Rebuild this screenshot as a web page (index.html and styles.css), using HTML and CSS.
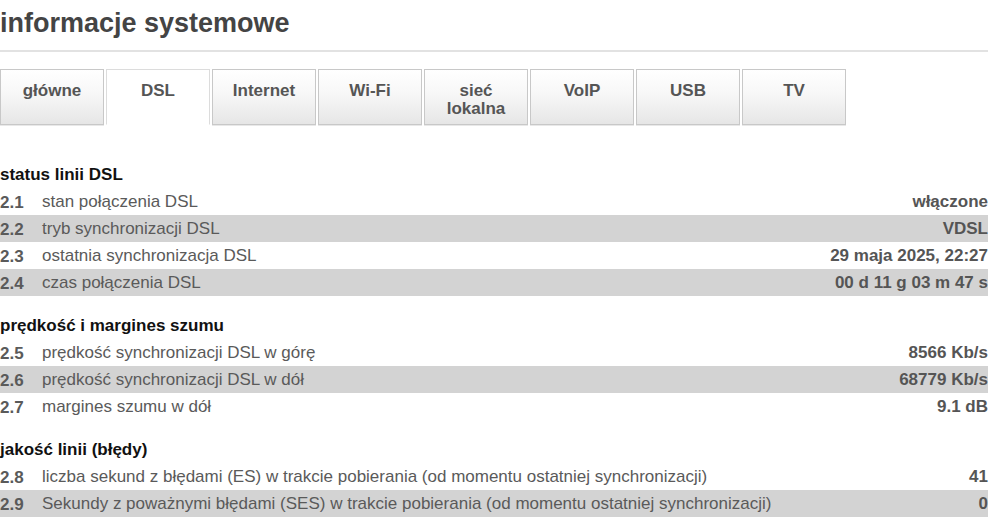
FILE: index.html
```html
<!DOCTYPE html>
<html lang="pl">
<head>
<meta charset="utf-8">
<title>informacje systemowe</title>
<link rel="stylesheet" href="styles.css">
</head>
<body>
<div class="page">
  <h1 class="title">informacje systemowe</h1>
  <nav class="tabs">
    <a class="tab">główne</a>
    <a class="tab active">DSL</a>
    <a class="tab">Internet</a>
    <a class="tab">Wi-Fi</a>
    <a class="tab">sieć<br>lokalna</a>
    <a class="tab">VoIP</a>
    <a class="tab">USB</a>
    <a class="tab">TV</a>
  </nav>

  <section class="group first">
    <h2 class="group-title">status linii DSL</h2>
    <div class="row"><span class="num">2.1</span><span class="label">stan połączenia DSL</span><span class="value">włączone</span></div>
    <div class="row alt"><span class="num">2.2</span><span class="label">tryb synchronizacji DSL</span><span class="value">VDSL</span></div>
    <div class="row"><span class="num">2.3</span><span class="label">ostatnia synchronizacja DSL</span><span class="value">29 maja 2025, 22:27</span></div>
    <div class="row alt"><span class="num">2.4</span><span class="label">czas połączenia DSL</span><span class="value">00 d 11 g 03 m 47 s</span></div>
  </section>

  <section class="group">
    <h2 class="group-title">prędkość i margines szumu</h2>
    <div class="row"><span class="num">2.5</span><span class="label">prędkość synchronizacji DSL w górę</span><span class="value">8566 Kb/s</span></div>
    <div class="row alt"><span class="num">2.6</span><span class="label">prędkość synchronizacji DSL w dół</span><span class="value">68779 Kb/s</span></div>
    <div class="row"><span class="num">2.7</span><span class="label">margines szumu w dół</span><span class="value">9.1 dB</span></div>
  </section>

  <section class="group">
    <h2 class="group-title">jakość linii (błędy)</h2>
    <div class="row"><span class="num">2.8</span><span class="label">liczba sekund z błędami (ES) w trakcie pobierania (od momentu ostatniej synchronizacji)</span><span class="value">41</span></div>
    <div class="row alt"><span class="num">2.9</span><span class="label">Sekundy z poważnymi błędami (SES) w trakcie pobierania (od momentu ostatniej synchronizacji)</span><span class="value">0</span></div>
  </section>
</div>
</body>
</html>
```

FILE: styles.css
```css
html, body {
  margin: 0;
  padding: 0;
  background: #fff;
}

body {
  font-family: "Liberation Sans", Arial, sans-serif;
  color: #555;
}

.page {
  width: 988px;
}

.title {
  margin: 0;
  padding: 8px 0 12px;
  font-size: 27px;
  line-height: 30px;
  font-weight: bold;
  color: #444;
  border-bottom: 2px solid #e2e2e2;
}

.tabs {
  display: flex;
  gap: 2px;
  margin-top: 17px;
}

.tab {
  box-sizing: border-box;
  width: 104px;
  height: 56px;
  padding-top: 12px;
  text-align: center;
  font-size: 17px;
  line-height: 18px;
  font-weight: bold;
  color: #555;
  border: 1px solid #c8c8c8;
  background: linear-gradient(to bottom, #ffffff 0%, #f7f7f7 45%, #e6e6e6 100%);
  box-shadow: 0 1px 0 #e8e8e8;
}

.tab.active {
  background: #fff;
  border-color: #dcdcdc;
  border-bottom-color: #fff;
  box-shadow: none;
}

.group {
  margin-top: 16px;
}

.group.first {
  margin-top: 36px;
}

.group-title {
  margin: 0;
  font-size: 17px;
  line-height: 27px;
  font-weight: bold;
  color: #111;
}

.row {
  display: flex;
  align-items: center;
  height: 27px;
  font-size: 17px;
}

.row.alt {
  background: #d3d3d3;
}

.num {
  width: 42px;
  flex: none;
  font-weight: bold;
  color: #5a5a5a;
  padding-top: 3px;
}

.label {
  flex: 1;
  color: #5a5a5a;
}

.value {
  font-weight: bold;
  color: #555;
  text-align: right;
}
```
